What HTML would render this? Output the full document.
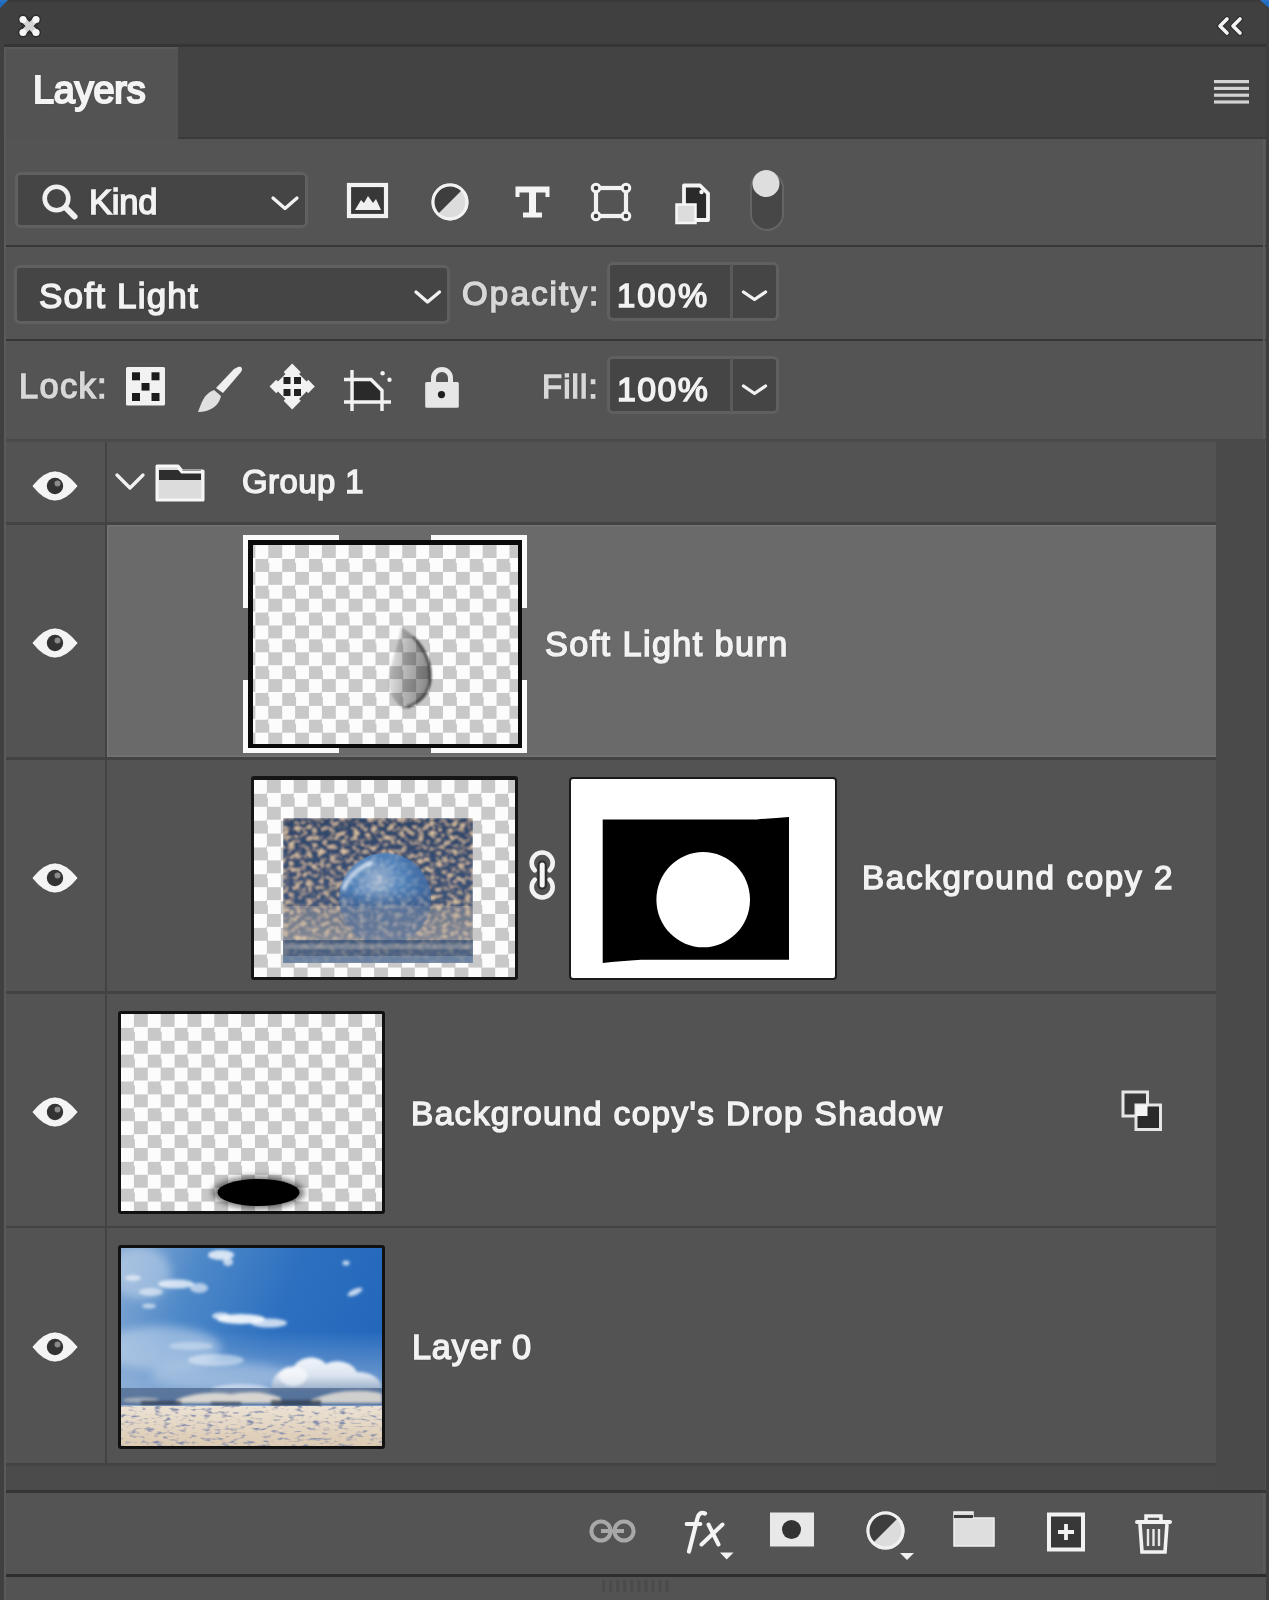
<!DOCTYPE html>
<html><head><meta charset="utf-8">
<style>
*{margin:0;padding:0;box-sizing:border-box}
html,body{width:1269px;height:1600px;overflow:hidden;background:#535353}
body{position:relative;font-family:"Liberation Sans",sans-serif;color:#f2f2f2}
.a{position:absolute}
.t{position:absolute;will-change:transform;white-space:nowrap;font-size:34px;line-height:1;-webkit-text-stroke:1.5px #f2f2f2;text-shadow:0 0 2px rgba(0,0,0,.75),0 0 1px rgba(0,0,0,.6)}
.lb{color:#d8d8d8;-webkit-text-stroke:1.5px #d8d8d8}
.box{position:absolute;background:#454545;border:3px solid #606060;border-radius:6px}
.sep{position:absolute;left:0;width:1269px;height:3px;background:#3d3d3d}
.rsep{position:absolute;left:4px;width:1212px;height:2.6px;background:#434343}
svg{position:absolute;overflow:visible}
</style></head><body>
<!-- title bar -->
<div class="a" style="left:0;top:0;width:1269px;height:45px;background:#404040"></div>
<div class="a" style="left:0;top:44px;width:1269px;height:3px;background:#353535"></div>
<!-- tab bar -->
<div class="a" style="left:0;top:47px;width:1269px;height:91px;background:#434343"></div>
<div class="a" style="left:4px;top:47px;width:174px;height:91px;background:#535353"></div>
<div class="a" style="left:0;top:137px;width:1269px;height:2px;background:#3a3a3a"></div>
<div class="a" style="left:4px;top:137px;width:174px;height:2px;background:#535353"></div>
<!-- toolbar rows -->
<div class="a" style="left:0;top:139px;width:1269px;height:299px;background:#545454"></div>
<div class="sep" style="top:244.8px;height:2.6px;background:#373737"></div>
<div class="sep" style="top:338.6px;height:2.6px;background:#363636"></div>
<div class="sep" style="top:439px;height:2.6px;background:#4a4a4a"></div>

<!-- layer list -->
<div class="a" style="left:0;top:441.6px;width:1269px;height:1050px;background:#535353"></div>
<div class="a" style="left:1216px;top:441.6px;width:49px;height:1050px;background:#4a4a4a"></div>
<div class="a" style="left:104.5px;top:441.6px;width:2.4px;height:1022px;background:#434343"></div>
<div class="a" style="left:107px;top:524.8px;width:1109px;height:232.2px;background:#6a6a6a;box-shadow:inset 1.5px 1.5px 0 #747474, inset 0 -1.5px 0 #727272"></div>
<div class="rsep" style="top:522.2px"></div>
<div class="rsep" style="top:757px"></div>
<div class="rsep" style="top:991.1px"></div>
<div class="rsep" style="top:1225.5px"></div>
<div class="a" style="left:4px;top:1463px;width:1212px;height:28px;background:#4b4b4b"></div>
<div class="rsep" style="top:1463px"></div>

<!-- bottom bar -->
<div class="a" style="left:0;top:1490.3px;width:1269px;height:2.6px;background:#363636"></div>
<div class="a" style="left:0;top:1493px;width:1269px;height:80px;background:#545454"></div>
<div class="a" style="left:0;top:1574.2px;width:1269px;height:3px;background:#2e2e2e"></div>
<div class="a" style="left:0;top:1577.2px;width:1269px;height:23px;background:#535353"></div>

<!-- side borders -->
<div class="a" style="left:0;top:0;width:4px;height:1600px;background:#404040"></div>
<div class="a" style="left:4.3px;top:47px;width:2px;height:1553px;background:#5a5a5a"></div>
<div class="a" style="left:4px;top:47px;width:174px;height:1.6px;background:#5a5a5a"></div>
<div class="a" style="left:1265.5px;top:0;width:4px;height:1600px;background:#3d3d3d"></div>
<div class="a" style="left:1263px;top:139px;width:2px;height:300px;background:#5a5a5a"></div>
<div class="a" style="left:1263px;top:1493px;width:2px;height:80px;background:#5a5a5a"></div>

<!-- controls -->
<div class="box" style="left:15px;top:172px;width:293px;height:56px"></div>
<div class="box" style="left:14px;top:265px;width:436px;height:59px"></div>
<div class="box" style="left:607px;top:262px;width:172px;height:59px"></div>
<div class="a" style="left:730px;top:264px;width:3px;height:55px;background:#5a5a5a"></div>
<div class="box" style="left:607px;top:356px;width:172px;height:58px"></div>
<div class="a" style="left:730px;top:358px;width:3px;height:54px;background:#5a5a5a"></div>
<!-- chevrons -->
<svg style="left:0;top:0" width="1269" height="1600" viewBox="0 0 1269 1600">
 <g fill="none" stroke="#f2f2f2" stroke-width="3.3" stroke-linecap="round" stroke-linejoin="round">
  <path d="M273 198 L285 208.5 L297 198"/>
  <path d="M416 292 L427.5 302 L439.5 292"/>
  <path d="M743.5 292 L754.5 299.5 L765.5 292"/>
  <path d="M743.5 386 L754.5 393.5 L765.5 386"/>
  <path d="M117 475 L130 488 L143 475"/>
 </g>
</svg>
<!-- thumbnails -->
<style>
.chk{position:absolute;background-color:#fff;background-image:conic-gradient(#c8c8c8 25%,#fcfcfc 0 50%,#c8c8c8 0 75%,#fcfcfc 0);background-size:26.8px 26.8px}
</style>
<!-- thumb: soft light burn (selected) -->
<div class="a" style="left:243px;top:535px;width:284px;height:218px;background:#fafafa"></div>
<div class="a" style="left:339px;top:535px;width:92px;height:218px;background:#6a6a6a"></div>
<div class="a" style="left:243px;top:608px;width:284px;height:72px;background:#6a6a6a"></div>
<div class="a" style="left:248px;top:540px;width:274px;height:208px;background:#0a0a0a"></div>
<div class="chk" style="left:253px;top:545px;width:265px;height:199px;background-position:2.4px 0.1px"></div>
<svg style="left:253px;top:545px;overflow:hidden" width="265" height="199" viewBox="0 0 265 199">
 <defs>
  <linearGradient id="moong" x1="0" y1="0" x2="1" y2="0.2">
   <stop offset="0" stop-color="#000" stop-opacity=".05"/>
   <stop offset=".5" stop-color="#000" stop-opacity=".28"/>
   <stop offset="1" stop-color="#000" stop-opacity=".45"/>
  </linearGradient>
  <filter id="bl2" x="-50%" y="-50%" width="200%" height="200%"><feGaussianBlur stdDeviation="1.2"/></filter>
 </defs>
 <path d="M148 82 C166 92 180 112 178 134 C176 150 166 160 151 164 C140 156 134 146 136 132 C138 116 146 100 148 82Z" fill="url(#moong)" filter="url(#bl2)"/>
 <path d="M160 92 C172 104 179 120 177 136 C175 150 166 158 154 162" fill="none" stroke="#000" stroke-opacity=".45" stroke-width="3" filter="url(#bl2)"/>
</svg>

<!-- thumb: background copy 2 -->
<div class="a" style="left:251px;top:776px;width:267px;height:204px;background:#151515;border-radius:3px"></div>
<div class="chk" style="left:254px;top:779.5px;width:261px;height:197px;background-position:0 0"></div>
<svg style="left:283px;top:818px;overflow:hidden" width="190" height="145" viewBox="0 0 190 145">
 <defs>
  <filter id="mottle" x="0" y="0" width="100%" height="100%">
   <feTurbulence type="fractalNoise" baseFrequency="0.17 0.22" numOctaves="3" seed="5" result="n"/>
   <feColorMatrix in="n" type="matrix" values="0 0 0 0 0  0 0 0 0 0  0 0 0 0 0  0 0 0 -3.4 1.75" result="a"/>
   <feFlood flood-color="#e2c8a6"/>
   <feComposite in2="a" operator="in" result="beige"/>
   <feMerge><feMergeNode in="SourceGraphic"/><feMergeNode in="beige"/></feMerge>
   <feGaussianBlur stdDeviation=".8"/>
  </filter>
  <linearGradient id="bgc2" x1="0" y1="0" x2="0" y2="1">
   <stop offset="0" stop-color="#2a4468"/>
   <stop offset=".6" stop-color="#3c5478"/>
   <stop offset="1" stop-color="#7e8496"/>
  </linearGradient>
  <radialGradient id="sph" cx="0.42" cy="0.3" r="0.65">
   <stop offset="0" stop-color="#cfe2f6"/>
   <stop offset=".4" stop-color="#5e9ad8"/>
   <stop offset="1" stop-color="#2a5a9a"/>
  </radialGradient>
  <linearGradient id="sphfade" x1="0" y1="0" x2="0" y2="1">
   <stop offset="0" stop-color="#fff"/>
   <stop offset=".4" stop-color="#fff"/>
   <stop offset=".62" stop-color="#fff" stop-opacity=".2"/>
   <stop offset="1" stop-color="#fff" stop-opacity="0"/>
  </linearGradient>
  <mask id="sphm" maskContentUnits="userSpaceOnUse"><rect x="0" y="35" width="190" height="92" fill="url(#sphfade)"/></mask>
  <filter id="b1" x="-20%" y="-20%" width="140%" height="140%"><feGaussianBlur stdDeviation="1.5"/></filter>
 </defs>
 <rect width="190" height="145" fill="url(#bgc2)" filter="url(#mottle)"/>
 <rect y="88" width="190" height="34" fill="#c8bcae" opacity=".3"/>
 <circle cx="102" cy="81" r="46" fill="#3a68a8" opacity=".3"/>
 <g mask="url(#sphm)">
  <circle cx="102" cy="81" r="46" fill="url(#sph)" opacity=".65"/>
 </g>
 <path d="M60 72 Q68 52 90 44" stroke="#f4f8ff" stroke-width="5" fill="none" opacity=".65" filter="url(#b1)"/>
 <rect y="122" width="190" height="23" fill="#2c4a74" opacity=".55"/>
 <rect y="126" width="190" height="5" fill="#d0c8c0" opacity=".4" filter="url(#b1)"/>
 <rect y="138" width="190" height="7" fill="#8aa4c4" opacity=".45"/>
</svg>
<!-- link chain -->
<svg style="left:0;top:0" width="1269" height="1600" viewBox="0 0 1269 1600">
 <g fill="none" stroke="#f2f2f2" stroke-width="4.6" stroke-linecap="round">
  <path d="M534.8 870.4 A10.5 10.5 0 1 1 549.6 870.4"/>
  <path d="M534.8 879.6 A10.5 10.5 0 1 0 549.6 879.6"/>
 </g>
 <path d="M542.2 865 V885" stroke="#262626" stroke-width="9.5" stroke-linecap="round" opacity=".75"/>
 <path d="M542.2 865 V885" stroke="#f6f6f6" stroke-width="5" stroke-linecap="round"/>
</svg>
<!-- mask thumb -->
<div class="a" style="left:569px;top:776.5px;width:267.5px;height:203.5px;background:#fff;border:2.6px solid #1a1a1a;border-radius:4px"></div>
<svg style="left:569px;top:776px" width="268" height="204" viewBox="569 776 268 204">
 <path d="M602.7 819.4 H757 Q775 818 789 817 V959.8 H641 Q620 961 602.7 963.1 Z" fill="#000"/>
 <ellipse cx="703.2" cy="899.7" rx="46.8" ry="47.6" fill="#fff"/>
</svg>

<!-- thumb: drop shadow -->
<div class="a" style="left:117.5px;top:1010.5px;width:267px;height:203.5px;background:#111;border-radius:3px"></div>
<div class="chk" style="left:120.5px;top:1013.5px;width:261px;height:197.5px;background-position:0 0"></div>
<svg style="left:120.5px;top:1013.5px" width="261" height="197.5" viewBox="0 0 261 197.5">
 <defs><filter id="shb" x="-50%" y="-50%" width="200%" height="200%"><feGaussianBlur stdDeviation="3"/></filter></defs>
 <ellipse cx="137.5" cy="178.5" rx="46" ry="16" fill="#000" opacity=".55" filter="url(#shb)"/>
 <ellipse cx="137.5" cy="178.5" rx="41" ry="13.5" fill="#000"/>
</svg>

<!-- thumb: layer 0 -->
<div class="a" style="left:117.5px;top:1245px;width:267px;height:204px;background:#111;border-radius:3px"></div>
<svg style="left:120.5px;top:1248px;overflow:hidden" width="261" height="198" viewBox="0 0 261 198">
 <defs>
  <linearGradient id="sky" x1="0" y1="0" x2="1" y2="0.3">
   <stop offset="0" stop-color="#86aad4"/>
   <stop offset=".3" stop-color="#4d88c8"/>
   <stop offset=".65" stop-color="#2d70c0"/>
   <stop offset="1" stop-color="#2468bc"/>
  </linearGradient>
  <linearGradient id="skyv" x1="0" y1="0" x2="0" y2="1">
   <stop offset="0" stop-color="#c8d8ea" stop-opacity="0"/>
   <stop offset=".42" stop-color="#c8d8ea" stop-opacity="0"/>
   <stop offset=".68" stop-color="#b4c8e0" stop-opacity=".5"/>
   <stop offset=".76" stop-color="#aebfd6" stop-opacity=".55"/>
  </linearGradient>
  <linearGradient id="snow" x1="0" y1="0" x2="0" y2="1">
   <stop offset="0" stop-color="#ece2d4"/>
   <stop offset="1" stop-color="#dccab2"/>
  </linearGradient>
  <linearGradient id="cum" x1="0" y1="0" x2="0" y2="1">
   <stop offset="0" stop-color="#ffffff"/>
   <stop offset=".55" stop-color="#e6ecf4"/>
   <stop offset="1" stop-color="#9aaec8"/>
  </linearGradient>
  <filter id="cb" x="-30%" y="-80%" width="160%" height="260%"><feGaussianBlur stdDeviation="1.4"/></filter>
  <filter id="cb2" x="-30%" y="-80%" width="160%" height="260%"><feGaussianBlur stdDeviation="5"/></filter>
  <filter id="snowtex" x="0" y="0" width="100%" height="100%">
   <feTurbulence type="fractalNoise" baseFrequency="0.12 0.3" numOctaves="2" seed="3" result="n"/>
   <feColorMatrix in="n" type="matrix" values="0 0 0 0 0  0 0 0 0 0  0 0 0 0 0  0 0 0 -3.6 1.75" result="a"/>
   <feFlood flood-color="#8690ae"/>
   <feComposite in2="a" operator="in" result="sh"/>
   <feMerge><feMergeNode in="SourceGraphic"/><feMergeNode in="sh"/></feMerge>
  </filter>
 </defs>
 <rect width="261" height="198" fill="url(#sky)"/>
 <g filter="url(#cb2)" fill="#e4ecf6">
  <ellipse cx="20" cy="25" rx="30" ry="26" opacity=".4"/>
  <ellipse cx="40" cy="100" rx="60" ry="22" opacity=".45"/>
  <ellipse cx="100" cy="128" rx="70" ry="14" opacity=".4"/>
 </g>
 <rect width="261" height="198" fill="url(#skyv)"/>
 <g fill="#fafcff" filter="url(#cb)">
  <ellipse cx="100" cy="7" rx="13" ry="5" opacity=".8"/>
  <ellipse cx="107" cy="14" rx="5" ry="4" opacity=".7"/>
  <ellipse cx="55" cy="36" rx="18" ry="4.5" opacity=".75"/>
  <ellipse cx="78" cy="40" rx="9" ry="5" opacity=".6"/>
  <ellipse cx="30" cy="44" rx="12" ry="4" opacity=".55"/>
  <ellipse cx="28" cy="58" rx="7" ry="2.5" opacity=".6"/>
  <ellipse cx="12" cy="30" rx="8" ry="3" opacity=".6"/>
  <ellipse cx="225" cy="15" rx="3.5" ry="2.5" opacity=".75"/>
  <ellipse cx="234" cy="44" rx="8" ry="3" opacity=".75" transform="rotate(-25 234 44)"/>
  <ellipse cx="120" cy="71" rx="24" ry="5" opacity=".9"/>
  <ellipse cx="148" cy="75" rx="18" ry="4.5" opacity=".75"/>
  <ellipse cx="100" cy="68" rx="9" ry="3.5" opacity=".75"/>
  <ellipse cx="95" cy="112" rx="28" ry="6" opacity=".45"/>
  <ellipse cx="70" cy="98" rx="22" ry="4" opacity=".35"/>
  <ellipse cx="120" cy="142" rx="30" ry="6" opacity=".5"/>
 </g>
 <g filter="url(#cb)">
  <path d="M150 142 C150 125 165 118 172 120 C178 108 196 106 205 116 C215 110 232 114 236 124 C250 124 261 130 261 142 Z" fill="url(#cum)" opacity=".92"/>
  <ellipse cx="172" cy="128" rx="14" ry="10" fill="#fff" opacity=".6"/>
 </g>
 <rect y="140" width="261" height="17" fill="#4a6286" opacity=".7"/>
 <g fill="#eee6da" filter="url(#cb)">
  <path d="M55 152 Q80 142 110 146 Q140 141 160 150 L160 155 L55 155Z" opacity=".85"/>
  <path d="M190 152 Q215 141 245 143 Q258 144 261 146 L261 155 L190 155Z" opacity=".8"/>
  <ellipse cx="20" cy="152" rx="18" ry="2.5" opacity=".5"/>
 </g>
 <g fill="#2a3446" filter="url(#cb)" opacity=".7">
  <rect x="20" y="153" width="40" height="4"/>
  <rect x="150" y="152" width="50" height="6"/>
  <rect x="90" y="154" width="30" height="3"/>
 </g>
 <rect y="158" width="261" height="40" fill="url(#snow)" filter="url(#snowtex)"/>
</svg>
<!-- icons -->
<svg style="left:0;top:0" width="1269" height="1600" viewBox="0 0 1269 1600">
 <!-- close -->
 <g stroke-linecap="round">
  <path d="M23 19.5 L36 32.5 M36 19.5 L23 32.5" stroke="#1a1a1a" stroke-width="10" stroke-opacity=".5" fill="none"/>
  <path d="M23 19.5 L36 32.5 M36 19.5 L23 32.5" stroke="#d2d2d2" stroke-width="5.5" fill="none"/>
 </g>
 <g fill="#f6f6f6"><circle cx="23" cy="19.5" r="3.6"/><circle cx="36" cy="19.5" r="3.6"/><circle cx="23" cy="32.5" r="3.6"/><circle cx="36" cy="32.5" r="3.6"/></g>
 <!-- collapse << -->
 <g fill="none" stroke-linecap="round" stroke-linejoin="round">
  <path d="M1227 19 L1220 26 L1227 33 M1240 19 L1233 26 L1240 33" stroke="#1a1a1a" stroke-width="6" stroke-opacity=".5"/>
  <path d="M1227 19 L1220 26 L1227 33 M1240 19 L1233 26 L1240 33" stroke="#f4f4f4" stroke-width="3.6"/>
 </g>
 <!-- hamburger -->
 <g fill="#d2d2d2">
  <rect x="1214" y="80" width="35" height="3.2"/>
  <rect x="1214" y="86.8" width="35" height="3.2"/>
  <rect x="1214" y="93.6" width="35" height="3.2"/>
  <rect x="1214" y="100.4" width="35" height="3.2"/>
 </g>
 <!-- magnifier -->
 <g fill="none" stroke="#f0f0f0" stroke-linecap="round">
  <circle cx="56.5" cy="198.5" r="11.8" stroke-width="4.6"/>
  <path d="M65.5 207.5 L74.5 216.5" stroke-width="6"/>
 </g>
 <!-- image icon -->
 <rect x="349" y="185" width="37" height="31" fill="#383838" stroke="#f2f2f2" stroke-width="4.2"/>
 <path d="M355 210 L361 200 L364 203 L368 196 L373 203 L376 199 L381 210 Z" fill="#f0f0f0"/>
 <!-- adjustment circle -->
 <circle cx="450" cy="202" r="17" fill="#dcdcdc" stroke="#f2f2f2" stroke-width="3"/>
 <path d="M438 214 A17 17 0 0 1 462 190 Z" fill="#3e3e3e"/>
 <circle cx="450" cy="202" r="17" fill="none" stroke="#f2f2f2" stroke-width="3"/>
 <!-- T -->
 <path d="M515.5 186.5 H549.5 V197 H545.5 V192.5 H536 V212.5 H542 V217.5 H523 V212.5 H529 V192.5 H519.5 V197 H515.5 Z" fill="#f4f4f4"/>
 <!-- shape -->
 <g fill="none" stroke="#f2f2f2">
  <rect x="596" y="188" width="30" height="28" stroke-width="4.2"/>
  <circle cx="596" cy="188" r="3.8" fill="#3a3a3a" stroke-width="3"/>
  <circle cx="626" cy="188" r="3.8" fill="#3a3a3a" stroke-width="3"/>
  <circle cx="596" cy="216" r="3.8" fill="#3a3a3a" stroke-width="3"/>
  <circle cx="626" cy="216" r="3.8" fill="#3a3a3a" stroke-width="3"/>
 </g>
 <!-- smart object -->
 <path d="M684 185.5 H700 L708 193.5 V220 H684 Z" fill="#2a2a2a" stroke="#f4f4f4" stroke-width="3.8" stroke-linejoin="round"/>
 <circle cx="701.5" cy="192" r="2.2" fill="#f4f4f4"/>
 <rect x="676.5" y="204.5" width="19" height="18.5" fill="#dcdcdc" stroke="#f6f6f6" stroke-width="2.5"/>
 <!-- toggle -->
 <rect x="751" y="172" width="32" height="58" rx="16" fill="#474747" stroke="#656565" stroke-width="2"/>
 <circle cx="766" cy="183.5" r="13.5" fill="#dedede"/>

 <!-- lock: checker -->
 <rect x="126" y="367" width="39" height="38.5" rx="1.5" fill="#f2f2f2"/>
 <g fill="#1c1c1c">
  <rect x="132" y="372.3" width="8" height="8"/>
  <rect x="151.5" y="372.3" width="8" height="8"/>
  <rect x="141.5" y="383" width="8" height="7.6"/>
  <rect x="132" y="393" width="8" height="8"/>
  <rect x="151.5" y="393" width="8" height="8"/>
 </g>
 <!-- brush -->
 <path d="M238 367 C242 366 243 369 241 372 L223 393 L216 388 L234 369 Z" fill="#f0f0f0"/>
 <path d="M214 390 L221 396 C219 406 210 412 198 412 C201 405 203 394 214 390 Z" fill="#e0e0e0"/>
 <!-- move -->
 <path d="M292.2 363.5 L314.8 386.5 L292.2 409.5 L269.6 386.5 Z" fill="#f2f2f2"/>
 <g fill="#222">
  <rect x="283.5" y="377" width="7" height="7"/>
  <rect x="294" y="377" width="7" height="7"/>
  <rect x="283.5" y="389" width="7" height="7"/>
  <rect x="294" y="389" width="7" height="7"/>
 </g>
 <path d="M276 379.5 L283.5 372 M301 372 L308.5 379.5 M308.5 393.5 L301 401 M283.5 401 L276 393.5" stroke="#545454" stroke-width="5.5" fill="none"/>
 <!-- crop / artboard -->
 <path d="M354 381 H371 L382 392 V401 H354 Z" fill="#2a2a2a"/>
 <g fill="none" stroke="#f2f2f2" stroke-width="3.4">
  <path d="M352 370 V411 M344 379.5 H371 L382 390.5 V411 M344 402 H391"/>
 </g>
 <circle cx="382.6" cy="373.3" r="2.2" fill="#f2f2f2"/>
 <circle cx="389.5" cy="379.8" r="2.2" fill="#f2f2f2"/>
 <!-- padlock -->
 <path d="M433.5 384 V378 A8.5 8.5 0 0 1 450.5 378 V384" fill="none" stroke="#e8e8e8" stroke-width="5"/>
 <rect x="425.2" y="382" width="33.6" height="25.8" rx="1.5" fill="#e6e6e6"/>
 <circle cx="441.5" cy="394.6" r="3.6" fill="#1e1e1e"/>

 <!-- group folder -->
 <path d="M157 466 H178 L182 471 H203 V500 H157 Z" fill="#dcdcdc" stroke="#f6f6f6" stroke-width="3" stroke-linejoin="round"/>
 <rect x="159" y="470" width="42" height="10" fill="#2e2e2e"/>
 <path d="M178 467.5 L182 472 H202" fill="none" stroke="#f6f6f6" stroke-width="3"/>
<g transform="translate(55 486)">
  <path d="M-23 0 Q-11 -15 0 -15 Q11 -15 23 0 Q11 15 0 15 Q-11 15 -23 0Z" fill="#f4f4f4" stroke="#2a2a2a" stroke-width="1" stroke-opacity=".5"/>
  <circle cx="0" cy="0" r="8.2" fill="#333"/>
  <circle cx="2.5" cy="-2.5" r="3" fill="#8a8a8a"/>
 </g><g transform="translate(55 643)">
  <path d="M-23 0 Q-11 -15 0 -15 Q11 -15 23 0 Q11 15 0 15 Q-11 15 -23 0Z" fill="#f4f4f4" stroke="#2a2a2a" stroke-width="1" stroke-opacity=".5"/>
  <circle cx="0" cy="0" r="8.2" fill="#333"/>
  <circle cx="2.5" cy="-2.5" r="3" fill="#8a8a8a"/>
 </g><g transform="translate(55 878)">
  <path d="M-23 0 Q-11 -15 0 -15 Q11 -15 23 0 Q11 15 0 15 Q-11 15 -23 0Z" fill="#f4f4f4" stroke="#2a2a2a" stroke-width="1" stroke-opacity=".5"/>
  <circle cx="0" cy="0" r="8.2" fill="#333"/>
  <circle cx="2.5" cy="-2.5" r="3" fill="#8a8a8a"/>
 </g><g transform="translate(55 1112)">
  <path d="M-23 0 Q-11 -15 0 -15 Q11 -15 23 0 Q11 15 0 15 Q-11 15 -23 0Z" fill="#f4f4f4" stroke="#2a2a2a" stroke-width="1" stroke-opacity=".5"/>
  <circle cx="0" cy="0" r="8.2" fill="#333"/>
  <circle cx="2.5" cy="-2.5" r="3" fill="#8a8a8a"/>
 </g><g transform="translate(55 1347)">
  <path d="M-23 0 Q-11 -15 0 -15 Q11 -15 23 0 Q11 15 0 15 Q-11 15 -23 0Z" fill="#f4f4f4" stroke="#2a2a2a" stroke-width="1" stroke-opacity=".5"/>
  <circle cx="0" cy="0" r="8.2" fill="#333"/>
  <circle cx="2.5" cy="-2.5" r="3" fill="#8a8a8a"/>
 </g>
</svg>
<!-- bottom bar icons -->
<svg style="left:0;top:0" width="1269" height="1600" viewBox="0 0 1269 1600">
 <!-- fx effects badge -->
 <rect x="1123" y="1092" width="24.5" height="24" fill="#383838" stroke="#e6e6e6" stroke-width="3"/>
 <rect x="1136" y="1105" width="24.5" height="24.5" fill="#2a2a2a" stroke="#e6e6e6" stroke-width="3"/>
 <rect x="1136" y="1105" width="11.5" height="11" fill="#f4f4f4"/>
 <!-- link -->
 <g fill="none" stroke="#a8a8a8" stroke-width="4">
  <circle cx="601" cy="1531" r="9.6"/>
  <circle cx="624" cy="1531" r="9.6"/>
  <path d="M601 1531 H624"/>
 </g>
 <g fill="none" stroke="#f4f4f4" stroke-linecap="round">
  <path d="M705 1513.5 Q699.5 1511 697.5 1518 L689 1551.5" stroke-width="4.2"/>
  <path d="M686.5 1524 H700.5" stroke-width="3.8"/>
  <path d="M701.5 1544.5 L722.5 1524.5 M708.5 1524.5 L718.5 1544.5" stroke-width="4"/>
 </g>
 <!-- mask -->
 <rect x="770" y="1512.5" width="44" height="34" fill="#e8e8e8"/>
 <circle cx="791.5" cy="1529.5" r="9.5" fill="#333"/>
 <!-- fx triangle -->
 <path d="M720 1552.5 H733.5 L726.7 1559.5 Z" fill="#f2f2f2"/>
 <!-- adjustment -->
 <circle cx="885.5" cy="1530.5" r="17.5" fill="#dcdcdc" stroke="#f0f0f0" stroke-width="3"/>
 <path d="M873 1543 A17.5 17.5 0 0 1 898 1518 Z" fill="#3e3e3e"/>
 <circle cx="885.5" cy="1530.5" r="17.5" fill="none" stroke="#f0f0f0" stroke-width="3"/>
 <path d="M900 1553 H914 L907 1560 Z" fill="#f2f2f2"/>
 <!-- folder -->
 <path d="M954 1512 H973 V1518 H994 V1546 H954 Z" fill="#dedede" stroke="#f0f0f0" stroke-width="1.5"/>
 <rect x="954" y="1515" width="19" height="3" fill="#3a3a3a"/>
 <!-- new layer -->
 <rect x="1049" y="1514.5" width="34" height="35" fill="#383838" stroke="#f2f2f2" stroke-width="4"/>
 <path d="M1066 1524 V1540 M1058 1532 H1074" stroke="#f2f2f2" stroke-width="3.8"/>
 <!-- trash -->
 <path d="M1137 1522 H1170" stroke="#f2f2f2" stroke-width="4" stroke-linecap="round"/>
 <path d="M1146 1521 V1516 H1161 V1521" fill="none" stroke="#f2f2f2" stroke-width="3.5"/>
 <path d="M1140 1524 L1142 1552 H1165 L1167 1524" fill="none" stroke="#f2f2f2" stroke-width="3.6"/>
 <path d="M1148 1529 V1546 M1153.5 1529 V1546 M1159 1529 V1546" stroke="#e8e8e8" stroke-width="2.4"/>
 <!-- grip -->
 <g fill="#4b4b4b"><rect x="602.0" y="1580" width="3.2" height="12"/><rect x="609.0" y="1580" width="3.2" height="12"/><rect x="616.1" y="1580" width="3.2" height="12"/><rect x="623.1" y="1580" width="3.2" height="12"/><rect x="630.2" y="1580" width="3.2" height="12"/><rect x="637.2" y="1580" width="3.2" height="12"/><rect x="644.3" y="1580" width="3.2" height="12"/><rect x="651.4" y="1580" width="3.2" height="12"/><rect x="658.4" y="1580" width="3.2" height="12"/><rect x="665.5" y="1580" width="3.2" height="12"/></g>
</svg>

<svg style="left:0;top:0" width="1269" height="20" viewBox="0 0 1269 20">
 <path d="M0 0 H8 L0 8 Z" fill="#1f6cc0"/>
 <path d="M1260 0 H1269 V8 Z" fill="#1f6cc0"/>
 <rect x="0" y="0" width="1269" height="2" fill="#3a3a3a"/>
 <path d="M0 0 H8 L6 2 H0 Z" fill="#2a72c4"/>
 <path d="M1260 0 H1269 V2 H1262 Z" fill="#2a72c4"/>
</svg>
<!-- texts -->
<div class="t" style="left:33.0px;top:71.5px;font-size:37.9px;letter-spacing:-0.20px;-webkit-text-stroke:2.1px #f4f4f4">Layers</div>
<div class="t" style="left:88.5px;top:184.7px;font-size:34.6px;letter-spacing:-0.24px">Kind</div>
<div class="t" style="left:39.2px;top:277.9px;font-size:35.1px;letter-spacing:1.17px">Soft Light</div>
<div class="t lb" style="left:461.6px;top:276.5px;font-size:33.1px;letter-spacing:2.14px">Opacity:</div>
<div class="t" style="left:617.0px;top:279.8px;font-size:32.9px;letter-spacing:2.02px">100%</div>
<div class="t lb" style="left:19.4px;top:369.0px;font-size:34.4px;letter-spacing:1.35px">Lock:</div>
<div class="t lb" style="left:542.4px;top:370.6px;font-size:32.8px;letter-spacing:1.15px">Fill:</div>
<div class="t" style="left:616.6px;top:372.7px;font-size:33.9px;letter-spacing:1.36px">100%</div>
<div class="t" style="left:241.6px;top:466.2px;font-size:32.9px;letter-spacing:0.46px">Group 1</div>
<div class="t" style="left:544.8px;top:626.7px;font-size:34.3px;letter-spacing:1.38px">Soft Light burn</div>
<div class="t" style="left:862.4px;top:860.8px;font-size:33.2px;letter-spacing:1.65px">Background copy 2</div>
<div class="t" style="left:411.4px;top:1096.5px;font-size:33.3px;letter-spacing:1.42px">Background copy&#39;s Drop Shadow</div>
<div class="t" style="left:411.8px;top:1330.0px;font-size:34.3px;letter-spacing:0.80px">Layer 0</div>
</body></html>
